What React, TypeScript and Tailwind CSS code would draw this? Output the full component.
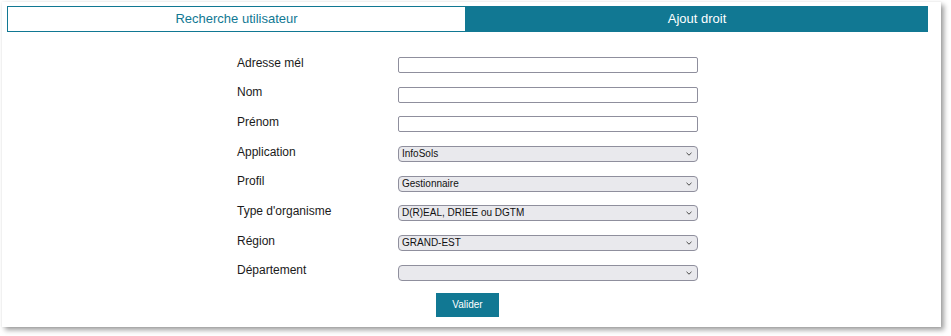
import React from "react";

const Chevron = () => (
  <svg width="6" height="4" viewBox="0 0 6 4" className="shrink-0">
    <path d="M0.5 0.8 L3 3.2 L5.5 0.8" fill="none" stroke="#4a4a4a" strokeWidth="1" />
  </svg>
);

const TextRow = ({ label }: { label: string }) => (
  <div className="flex items-start h-[29.7px]">
    <div className="w-[161px] -mt-[1px] text-[12px] leading-[14px] text-[#1a1a1a]">{label}</div>
    <div className="mt-[0.5px] w-[300px] h-[16px] border border-[#8f8f9d] rounded-[2px] bg-white" />
  </div>
);

const SelectRow = ({ label, value }: { label: string; value: string }) => (
  <div className="flex items-start h-[29.7px]">
    <div className="w-[161px] -mt-[1px] text-[12px] leading-[14px] text-[#1a1a1a]">{label}</div>
    <div className="mt-[0.5px] w-[300px] h-[16px] border border-[#8f8f9d] rounded-[4px] bg-[#e9e9ed] flex items-center justify-between pl-[3px] pr-[5px]">
      <span className="text-[10px] leading-[12px] text-[#111]">{value}</span>
      <Chevron />
    </div>
  </div>
);

export default function App() {
  return (
    <div className="bg-white w-[951px] h-[336px] p-[2px]" style={{ fontFamily: '"Liberation Sans", Arial, sans-serif' }}>
      <div className="w-[939px] h-[325px] bg-white shadow-[3px_3px_5px_rgba(0,0,0,0.38),0_0_2px_rgba(0,0,0,0.08)] pl-[5px] pt-[4px]">
        <div className="flex w-[921px] h-[26px]">
          <div className="w-[459px] h-full border border-[#117893] flex items-center justify-center text-[13px] text-[#117893]">
            Recherche utilisateur
          </div>
          <div className="w-[462px] h-full bg-[#117893] flex items-center justify-center text-[13px] text-white">
            Ajout droit
          </div>
        </div>
        <div className="ml-[230px] mt-[24.5px] flex flex-col">
          <TextRow label="Adresse mél" />
          <TextRow label="Nom" />
          <TextRow label="Prénom" />
          <SelectRow label="Application" value="InfoSols" />
          <SelectRow label="Profil" value="Gestionnaire" />
          <SelectRow label="Type d'organisme" value="D(R)EAL, DRIEE ou DGTM" />
          <SelectRow label="Région" value="GRAND-EST" />
          <SelectRow label="Département" value="" />
          <div className="ml-[199px] mt-[-1.5px]">
            <button className="w-[63px] h-[24px] bg-[#117893] text-white text-[10px] flex items-center justify-center">
              Valider
            </button>
          </div>
        </div>
      </div>
    </div>
  );
}
